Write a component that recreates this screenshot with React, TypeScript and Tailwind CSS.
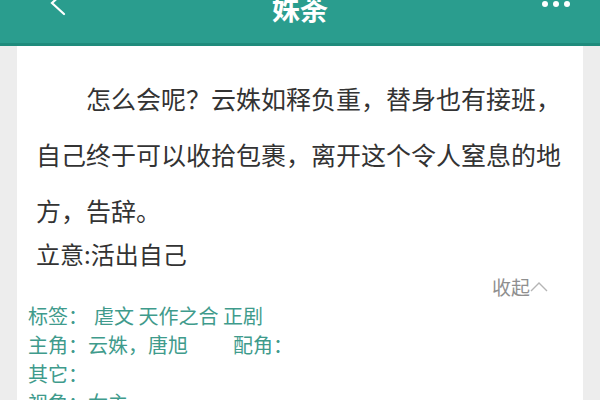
import React from 'react';

const tags = [
  { label: '标签：', value: '虐文 天作之合 正剧', gap: 'ml-[6px]' },
];

export default function App() {
  return (
    <div
      className="w-[600px] h-[400px] overflow-hidden bg-[#ededed]"
      style={{ fontFamily: '"Noto Sans CJK SC", "Noto Sans", sans-serif' }}
    >
      <header className="relative h-[46px] bg-[#2a9d8e] border-b-[3px] border-[#1f8b7c] flex justify-center">
        <svg
          className="absolute left-[44px] top-[-10px]"
          width="26"
          height="28"
          viewBox="0 0 26 28"
          fill="none"
          stroke="white"
          strokeWidth="2.2"
          strokeLinecap="round"
        >
          <path d="M20 2 L8 13 L20 24" />
        </svg>
        <h1 className="text-white text-[28px] font-bold leading-none -mt-[6px]">姝荼</h1>
        <div className="absolute right-[30px] top-[1px] flex gap-[5px]">
          <span className="w-[6px] h-[6px] rounded-full bg-white" />
          <span className="w-[6px] h-[6px] rounded-full bg-white" />
          <span className="w-[6px] h-[6px] rounded-full bg-white" />
        </div>
      </header>

      <main className="mx-[17px] bg-white h-[400px] pl-[19px] pr-[19px] pt-[24px]">
        <p className="text-[25px] leading-[56px] text-[#333] indent-[2em]">
          怎么会呢？云姝如释负重，替身也有接班，自己终于可以收拾包裹，离开这个令人窒息的地方，告辞。
        </p>
        <p className="text-[24px] leading-[32px] text-[#333]">立意:活出自己</p>

        <div className="flex justify-end items-center mt-[3px] pr-[16px] h-[28px] text-[19px] text-[#8f8f8f]">
          <span>收起</span>
          <svg width="18" height="12" viewBox="0 0 18 12" fill="none" stroke="#b5b5b5" strokeWidth="1.4">
            <path d="M1 10 L9 2 L17 10" />
          </svg>
        </div>

        <div className="-ml-[8px] text-[20px] leading-[29px] text-[#3f9b8c]">
          {tags.map((t) => (
            <div key={t.label}>
              {t.label}
              <span className={t.gap}>{t.value}</span>
            </div>
          ))}
          <div className="flex">
            <span>主角：</span>
            <span className="ml-[0px] w-[145px]">云姝，唐旭</span>
            <span>配角：</span>
          </div>
          <div>其它：</div>
          <div className="flex">
            <span>视角：</span>
            <span className="ml-[0px]">女主</span>
          </div>
        </div>
      </main>
    </div>
  );
}
